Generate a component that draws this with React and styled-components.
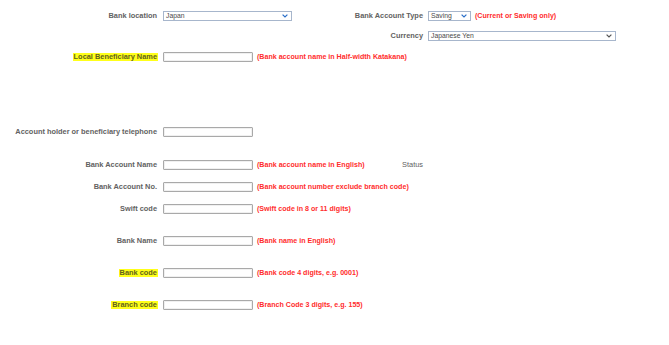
import React from 'react'
import styled, { createGlobalStyle } from 'styled-components'

const GlobalStyle = createGlobalStyle`
  html, body {
    margin: 0;
    padding: 0;
    background: #fff;
  }
  body {
    font-family: "Liberation Sans", Arial, sans-serif;
  }
`;

const Form = styled.div`
  width: 669px;
  height: 345px;
  display: flex;
  flex-direction: column;
  overflow: hidden;
`;

const Row = styled.div`
  display: grid;
  grid-template-columns: 158px 260px auto;
  column-gap: 5px;
  height: 11px;
  align-items: center;
  margin-top: ${props => props.top || 0}px;
`;

const Label = styled.div`
  justify-self: end;
  font-size: 7.4px;
  font-weight: bold;
  color: #626262;
  white-space: nowrap;
  line-height: 8px;
  padding: 0 1px;
  background: ${props => props.mark ? '#ffff1a' : 'transparent'};
  ${props => props.mark && 'color: #62621a;'}
`;

const Cell = styled.div`
  display: flex;
  align-items: center;
  height: 11px;
`;

const Input = styled.div`
  box-sizing: border-box;
  width: 90px;
  height: 10px;
  border: 1px solid #a9a9a9;
  border-radius: 1px;
  box-shadow: inset 0 0 0 1px #f0f0f0;
  background: #fff;
`;

const Select = styled.div`
  box-sizing: border-box;
  width: ${props => props.width}px;
  height: 10px;
  border: 1px solid #a7b6cc;
  background: #fff;
  display: flex;
  align-items: center;
  justify-content: space-between;
  padding: 0 3px 0 2px;
  font-size: 6.8px;
  color: #4a4a4a;
`;

const Hint = styled.span`
  margin-left: 4px;
  font-size: 7.1px;
  font-weight: bold;
  color: #ff2d2d;
  white-space: nowrap;
`;

const SideLabel = styled.span`
  margin-left: auto;
  font-size: 7.4px;
  font-weight: ${props => props.plain ? 'normal' : 'bold'};
  color: #626262;
  white-space: nowrap;
`;

const Chevron = ({ color = '#2a6fc9' }) => (
  <svg width="6" height="4" viewBox="0 0 6 4">
    <path d="M0.6 0.6 L3 3 L5.4 0.6" fill="none" stroke={color} strokeWidth="1.2" />
  </svg>
)

const FieldRow = ({ top, label, mark, hint, side }) => (
  <Row top={top}>
    <Label mark={mark}>{label}</Label>
    <Cell>
      <Input />
      {hint && <Hint>{hint}</Hint>}
      {side && <SideLabel plain>{side}</SideLabel>}
    </Cell>
  </Row>
)

export default function App() {
  return (
    <>
      <GlobalStyle />
      <Form>
        <Row top={10}>
          <Label>Bank location</Label>
          <Cell>
            <Select width={129}>
              <span>Japan</span>
              <Chevron />
            </Select>
            <SideLabel>Bank Account Type</SideLabel>
          </Cell>
          <Cell>
            <Select width={43}>
              <span>Saving</span>
              <Chevron />
            </Select>
            <Hint>(Current or Saving only)</Hint>
          </Cell>
        </Row>
        <Row top={9}>
          <div />
          <Cell>
            <SideLabel>Currency</SideLabel>
          </Cell>
          <Cell>
            <Select width={188}>
              <span>Japanese Yen</span>
              <Chevron color="#555" />
            </Select>
          </Cell>
        </Row>
        <FieldRow top={10} label="Local Beneficiary Name" mark hint="(Bank account name in Half-width Katakana)" />
        <FieldRow top={64} label="Account holder or beneficiary telephone" />
        <FieldRow top={22} label="Bank Account Name" hint="(Bank account name in English)" side="Status" />
        <FieldRow top={11} label="Bank Account No." hint="(Bank account number exclude branch code)" />
        <FieldRow top={11} label="Swift code" hint="(Swift code in 8 or 11 digits)" />
        <FieldRow top={21} label="Bank Name" hint="(Bank name in English)" />
        <FieldRow top={21} label="Bank code" mark hint="(Bank code 4 digits, e.g. 0001)" />
        <FieldRow top={21} label="Branch code" mark hint="(Branch Code 3 digits, e.g. 155)" />
      </Form>
    </>
  )
}
